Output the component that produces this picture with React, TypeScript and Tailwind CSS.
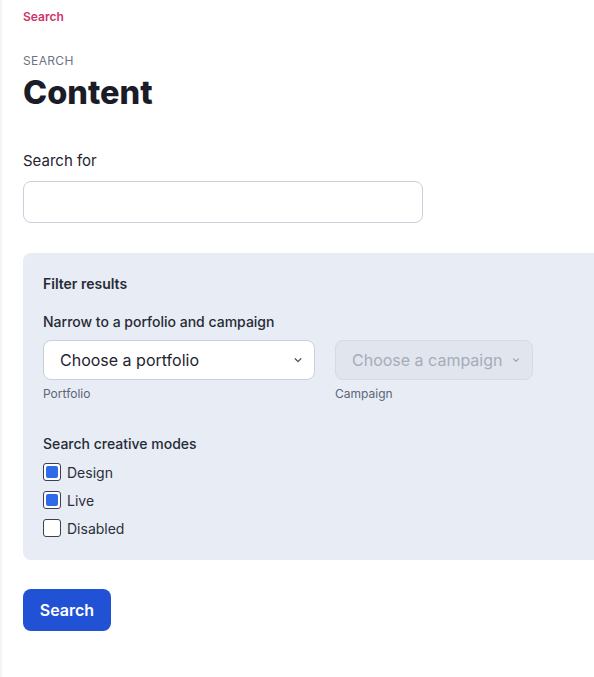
import { useState } from "react";

function Chevron({ className }: { className?: string }) {
  return (
    <svg viewBox="0 0 20 20" fill="none" className={className}>
      <path d="M6.5 8.5L10 12l3.5-3.5" stroke="currentColor" strokeWidth="1.6" strokeLinecap="round" strokeLinejoin="round" />
    </svg>
  );
}

function Check({ label, initial }: { label: string; initial: boolean }) {
  const [on, setOn] = useState(initial);
  return (
    <label className="flex items-center gap-[6px] h-[28px] cursor-pointer" onClick={() => setOn(!on)}>
      <span className="w-[18px] h-[18px] rounded-[3px] border-[1.5px] border-[#3b4150] bg-white p-[2px] flex">
        {on && <span className="flex-1 rounded-[2px] bg-[#2f6be6]" />}
      </span>
      <span className="text-[14px] text-[#2a2f3a]">{label}</span>
    </label>
  );
}

export default function App() {
  return (
    <div className="w-[594px] h-[677px] overflow-hidden bg-white border-l-2 border-[#f3f4f6] font-['Inter',sans-serif] text-[#1f2330]">
      <div className="pl-[21px]">
        <div className="pt-[10px] text-[12px] font-semibold text-[#d0336a] leading-[14px]">Search</div>

        <div className="mt-[30px] text-[12px] tracking-[0.03em] text-[#6b7385] leading-[14px]">SEARCH</div>
        <h1 className="mt-[4px] text-[32.5px] font-extrabold text-[#1a1d27] leading-[42px]">Content</h1>

        <div className="mt-[38px] text-[15px] text-[#1f2330] leading-[18px]">Search for</div>
        <input className="mt-[11px] block w-[400px] h-[42px] rounded-lg border border-[#c9d0dc] bg-white px-3 outline-none" />

        <div className="mt-[30px] w-[600px] rounded-lg bg-[#e8ecf4] pt-[22px] pb-[18px] pl-[20px]">
          <div className="text-[14px] font-semibold text-[#262b36] leading-[18px]">Filter results</div>
          <div className="mt-[20px] text-[14px] font-medium text-[#262b36] leading-[18px]">Narrow to a porfolio and campaign</div>

          <div className="mt-[9px] flex gap-[20px]">
            <div>
              <div className="w-[272px] h-[40px] rounded-lg border border-[#c9d0dc] bg-white flex items-center justify-between pl-[16px] pr-[8px]">
                <span className="text-[16px] text-[#1f2330]">Choose a portfolio</span>
                <Chevron className="w-[16px] h-[16px] text-[#4b5262]" />
              </div>
              <div className="mt-[5px] text-[12px] text-[#5d6577]">Portfolio</div>
            </div>
            <div>
              <div className="w-[198px] h-[40px] rounded-lg border border-[#d5dae4] bg-[#e1e5ee] flex items-center justify-between pl-[16px] pr-[9px]">
                <span className="text-[16px] text-[#a6acb9]">Choose a campaign</span>
                <Chevron className="w-[14px] h-[14px] text-[#9aa1ae]" />
              </div>
              <div className="mt-[5px] text-[12px] text-[#5d6577]">Campaign</div>
            </div>
          </div>

          <div className="mt-[32px] text-[14px] font-medium text-[#262b36] leading-[18px]">Search creative modes</div>
          <div className="mt-[5px] flex flex-col">
            <Check label="Design" initial={true} />
            <Check label="Live" initial={true} />
            <Check label="Disabled" initial={false} />
          </div>
        </div>

        <button className="mt-[29px] w-[88px] h-[42px] rounded-lg bg-[#2152d6] text-white text-[16px] font-semibold">
          Search
        </button>
      </div>
    </div>
  );
}
